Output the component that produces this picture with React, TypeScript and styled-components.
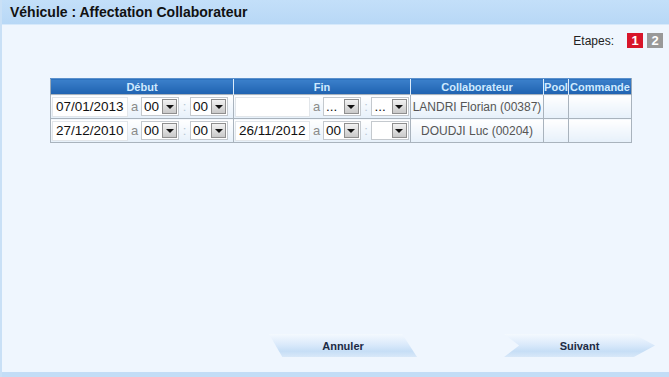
import styled, { createGlobalStyle } from "styled-components";

const GlobalStyle = createGlobalStyle`
  html, body {
    margin: 0;
    padding: 0;
    background: #eff6fe;
    font-family: "Liberation Sans", Arial, sans-serif;
  }
`;

const Window = styled.div`
  width: 669px;
  height: 377px;
  display: flex;
  flex-direction: column;
  background: #eff6fe;
  border-left: 2px solid #c9e0f6;
  box-sizing: border-box;
`;

const TitleBar = styled.div`
  height: 24px;
  flex: none;
  background: linear-gradient(#c3dff9, #b8d8f6);
  border-bottom: 1px solid #d6e9fb;
  display: flex;
  align-items: center;
  padding-left: 8px;
  font-size: 14px;
  font-weight: bold;
  color: #111;
`;

const Body = styled.div`
  flex: 1;
  display: flex;
  flex-direction: column;
  padding: 8px 6px 0 48px;
`;

const StepsRow = styled.div`
  display: flex;
  justify-content: flex-end;
  align-items: center;
  gap: 4px;
  font-size: 12px;
  color: #222;
`;

const StepsLabel = styled.span`
  margin-right: 9px;
`;

const Step = styled.span<{ $active?: boolean }>`
  width: 16px;
  height: 15px;
  display: inline-flex;
  align-items: center;
  justify-content: center;
  font-size: 13px;
  font-weight: bold;
  color: #fff;
  background: ${({ $active }) => ($active ? "#d8152a" : "#999")};
`;

const Table = styled.table`
  margin-top: 30px;
  width: 581px;
  table-layout: fixed;
  border-collapse: collapse;
  font-size: 12px;
`;

const Th = styled.th`
  height: 15px;
  padding: 0;
  font-size: 11px;
  font-weight: bold;
  color: #cfeaff;
  background: linear-gradient(#3b80cb, #1f62b0);
  border-left: 1px solid #dcecfb;
  border-top: 1px solid #5a90cc;
  white-space: nowrap;
  overflow: hidden;
  &:first-child {
    border-left: 1px solid #9aa9b8;
  }
  &:last-child {
    border-right: 1px solid #9aa9b8;
  }
`;

const Td = styled.td<{ $center?: boolean }>`
  height: 23px;
  padding: 0 1px;
  border: 1px solid #a9b3bd;
  background: linear-gradient(#ffffff, #e6f0fa);
  color: #555;
  text-align: ${({ $center }) => ($center ? "center" : "left")};
  white-space: nowrap;
  overflow: hidden;
`;

const Cell = styled.div`
  display: flex;
  align-items: center;
`;

const DateBox = styled.div`
  width: 76px;
  height: 20px;
  box-sizing: border-box;
  background: #fff;
  border: 1px solid #e2e6ea;
  font-size: 13.5px;
  color: #111;
  display: flex;
  align-items: center;
  padding-left: 3px;
`;

const Sep = styled.span<{ $light?: boolean }>`
  color: ${({ $light }) => ($light ? "#b8c6d2" : "#8a8a8a")};
  font-size: 13px;
  width: ${({ $light }) => ($light ? "11px" : "13px")};
  text-align: center;
`;

const SelectBox = styled.div`
  width: 38px;
  height: 19px;
  box-sizing: border-box;
  background: #fff;
  border: 1px solid #c4c9ce;
  display: flex;
  align-items: center;
  justify-content: space-between;
  font-size: 13.5px;
  color: #111;
  padding-left: 2px;
`;

const ArrowBtn = styled.span`
  width: 15px;
  height: 15px;
  margin-right: 1px;
  box-sizing: border-box;
  border: 1px solid #8f8f8f;
  background: linear-gradient(#f2f2f2, #c9c9c9);
  display: flex;
  align-items: center;
  justify-content: center;
  &::after {
    content: "";
    border-left: 4px solid transparent;
    border-right: 4px solid transparent;
    border-top: 4px solid #111;
    margin-top: 1px;
  }
`;

const Footer = styled.div`
  display: flex;
  margin-top: auto;
  margin-bottom: 15px;
  padding-left: 219px;
  gap: 87px;
`;

const BaseButton = styled.div`
  height: 23px;
  width: 148px;
  display: flex;
  align-items: center;
  justify-content: center;
  font-size: 11px;
  font-weight: bold;
  color: #1d2b44;
  background: linear-gradient(#f4f9fe 0%, #dbeafb 45%, #c6def6 75%, #d8e8f9 100%);
`;

const CancelButton = styled(BaseButton)`
  clip-path: polygon(0 0, 90% 0, 100% 100%, 9% 100%);
`;

const NextButton = styled(BaseButton)`
  width: 151px;
  clip-path: polygon(0 0, 86% 0, 100% 50%, 86% 100%, 0 100%, 10% 50%);
`;

const BottomBar = styled.div`
  height: 5px;
  flex: none;
  background: #c3ddf6;
`;

const Select = ({ value }: { value: string }) => (
  <SelectBox>
    <span>{value}</span>
    <ArrowBtn />
  </SelectBox>
);

interface Row {
  debut: string;
  dh: string;
  dm: string;
  fin: string;
  fh: string;
  fm: string;
  collab: string;
}

const rows: Row[] = [
  { debut: "07/01/2013", dh: "00", dm: "00", fin: "", fh: "...", fm: "...", collab: "LANDRI Florian (00387)" },
  { debut: "27/12/2010", dh: "00", dm: "00", fin: "26/11/2012", fh: "00", fm: "", collab: "DOUDJI Luc (00204)" },
];

const columns = [
  { label: "Début", width: 183 },
  { label: "Fin", width: 177 },
  { label: "Collaborateur", width: 133 },
  { label: "Pool", width: 25 },
  { label: "Commande", width: 63 },
];

export default function App() {
  return (
    <>
      <GlobalStyle />
      <Window>
        <TitleBar>Véhicule : Affectation Collaborateur</TitleBar>
        <Body>
          <StepsRow>
            <StepsLabel>Etapes:</StepsLabel>
            <Step $active>1</Step>
            <Step>2</Step>
          </StepsRow>
          <Table>
            <colgroup>
              {columns.map((c) => (
                <col key={c.label} width={c.width} />
              ))}
            </colgroup>
            <thead>
              <tr>
                {columns.map((c) => (
                  <Th key={c.label}>{c.label}</Th>
                ))}
              </tr>
            </thead>
            <tbody>
              {rows.map((r) => (
                <tr key={r.collab}>
                  <Td>
                    <Cell>
                      <DateBox>{r.debut}</DateBox>
                      <Sep>a</Sep>
                      <Select value={r.dh} />
                      <Sep $light>:</Sep>
                      <Select value={r.dm} />
                    </Cell>
                  </Td>
                  <Td>
                    <Cell>
                      <DateBox>{r.fin}</DateBox>
                      <Sep>a</Sep>
                      <Select value={r.fh} />
                      <Sep $light>:</Sep>
                      <Select value={r.fm} />
                    </Cell>
                  </Td>
                  <Td $center>{r.collab}</Td>
                  <Td />
                  <Td />
                </tr>
              ))}
            </tbody>
          </Table>
          <Footer>
            <CancelButton>Annuler</CancelButton>
            <NextButton>Suivant</NextButton>
          </Footer>
        </Body>
        <BottomBar />
      </Window>
    </>
  );
}
